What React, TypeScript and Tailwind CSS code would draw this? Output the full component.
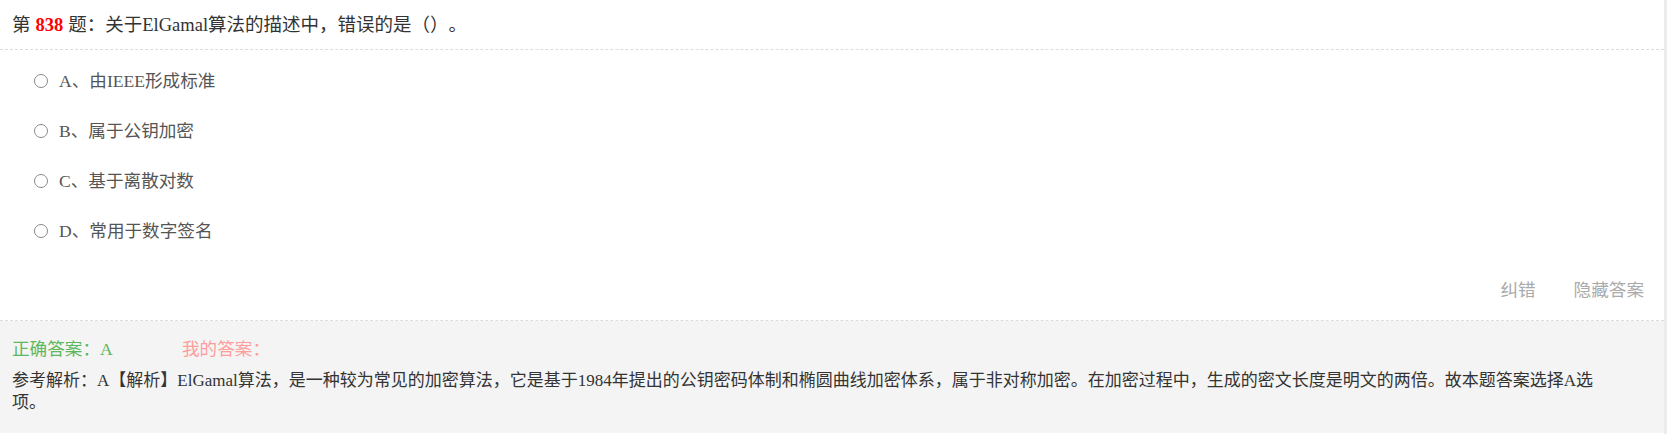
import React from 'react';

const options = [
  { key: 'A', text: '由IEEE形成标准' },
  { key: 'B', text: '属于公钥加密' },
  { key: 'C', text: '基于离散对数' },
  { key: 'D', text: '常用于数字签名' },
];

const font = "font-['Liberation_Serif','Noto_Sans_CJK_SC',serif]";

const App: React.FC = () => {
  return (
    <div className={`w-full min-h-[434px] bg-white border-r-[3px] border-[#ececec] text-[17.6px] text-[#333] [text-spacing-trim:space-all] ${font}`}>
      <div className="h-[50px] px-3 pt-[3px] flex items-center text-[18.5px] border-b border-dashed border-[#dcdcdc]">
        <span>第</span>
        <span className="mx-[5px] font-bold text-[#ff0000]">838</span>
        <span>题：关于ElGamal算法的描述中，错误的是（）。</span>
      </div>

      <div className="pt-[6px]">
        {options.map((o) => (
          <label key={o.key} className="h-[50px] pl-[34px] flex items-center cursor-pointer">
            <span className="w-[14px] h-[14px] rounded-full border border-[#8a8a8a] bg-white mr-[11px]" />
            <span className="text-[#555]">{o.key}、{o.text}</span>
          </label>
        ))}
      </div>

      <div className="h-[65px] pt-[22px] flex items-start justify-end pr-[20px] gap-[38px] leading-[24px] text-[#aaaaaa] border-b border-dashed border-[#dcdcdc]">
        <span className="cursor-pointer">纠错</span>
        <span className="cursor-pointer">隐藏答案</span>
      </div>

      <div className="bg-[#f4f4f4] min-h-[112px] pt-[16px] pl-3 pr-[70px]">
        <div className="h-[24px] flex items-center">
          <span className="w-[170px] text-[#5cb85c]">正确答案：A</span>
          <span className="text-[#ff9d9d]">我的答案：</span>
        </div>
        <p className="mt-[9px] text-[17px] leading-[22px]">
          参考解析：A【解析】ElGamal算法，是一种较为常见的加密算法，它是基于1984年提出的公钥密码体制和椭圆曲线加密体系，属于非对称加密。在加密过程中，生成的密文长度是明文的两倍。故本题答案选择A选项。
        </p>
      </div>
    </div>
  );
};

export default App;
